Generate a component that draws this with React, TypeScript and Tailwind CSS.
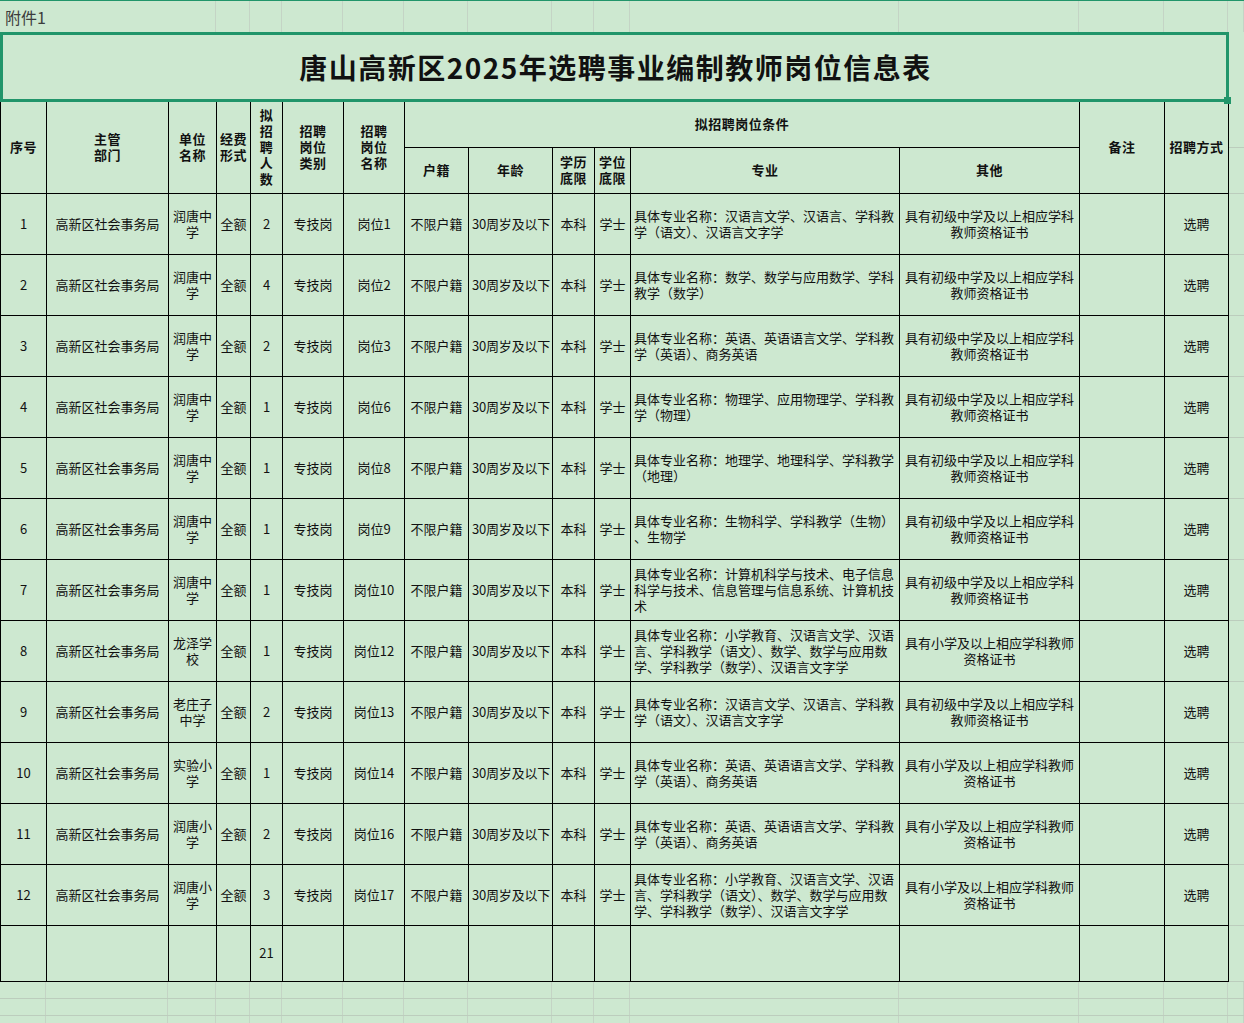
import React from 'react';

const MID = '具有初级中学及以上相应学科教师资格证书';
const PRI = '具有小学及以上相应学科教师资格证书';

const rows = [
  { no: 1, unit: '润唐中学', num: '2', post: '岗位1', major: '具体专业名称：汉语言文学、汉语言、学科教学（语文）、汉语言文字学', other: MID },
  { no: 2, unit: '润唐中学', num: '4', post: '岗位2', major: '具体专业名称：数学、数学与应用数学、学科教学（数学）', other: MID },
  { no: 3, unit: '润唐中学', num: '2', post: '岗位3', major: '具体专业名称：英语、英语语言文学、学科教学（英语）、商务英语', other: MID },
  { no: 4, unit: '润唐中学', num: '1', post: '岗位6', major: '具体专业名称：物理学、应用物理学、学科教学（物理）', other: MID },
  { no: 5, unit: '润唐中学', num: '1', post: '岗位8', major: '具体专业名称：地理学、地理科学、学科教学（地理）', other: MID },
  { no: 6, unit: '润唐中学', num: '1', post: '岗位9', major: '具体专业名称：生物科学、学科教学（生物）、生物学', other: MID },
  { no: 7, unit: '润唐中学', num: '1', post: '岗位10', major: '具体专业名称：计算机科学与技术、电子信息科学与技术、信息管理与信息系统、计算机技术', other: MID },
  { no: 8, unit: '龙泽学校', num: '1', post: '岗位12', major: '具体专业名称：小学教育、汉语言文学、汉语言、学科教学（语文）、数学、数学与应用数学、学科教学（数学）、汉语言文字学', other: PRI },
  { no: 9, unit: '老庄子中学', num: '2', post: '岗位13', major: '具体专业名称：汉语言文学、汉语言、学科教学（语文）、汉语言文字学', other: MID },
  { no: 10, unit: '实验小学', num: '1', post: '岗位14', major: '具体专业名称：英语、英语语言文学、学科教学（英语）、商务英语', other: PRI },
  { no: 11, unit: '润唐小学', num: '2', post: '岗位16', major: '具体专业名称：英语、英语语言文学、学科教学（英语）、商务英语', other: PRI },
  { no: 12, unit: '润唐小学', num: '3', post: '岗位17', major: '具体专业名称：小学教育、汉语言文学、汉语言、学科教学（语文）、数学、数学与应用数学、学科教学（数学）、汉语言文字学', other: PRI },
];

const widths = [
  'w-[46px]', 'w-[122px]', 'w-[48px]', 'w-[34px]', 'w-[32px]', 'w-[61px]', 'w-[61px]', 'w-[64px]',
  'w-[84px]', 'w-[42px]', 'w-[36px]', 'w-[269px]', 'w-[180px]', 'w-[85px]', 'w-[64px]', 'w-[16px]',
];

const gridCols =
  'grid grid-cols-[46px_122px_48px_34px_32px_61px_61px_64px_84px_42px_36px_269px_180px_85px_64px_16px]';

const td = 'border border-black text-center align-middle px-[3px] font-normal';
const th = 'border border-black border-t-0 text-center align-middle px-[3px] font-bold tracking-[0.5px]';
const pad = 'border-0 border-b border-[#bccdbd]';

export default function App() {
  return (
    <div className="w-[1244px] h-[1023px] overflow-hidden bg-[#cde8d0] text-[#111] font-['Noto_Sans_CJK_SC',sans-serif] text-[13px] leading-[16px]">
      {/* 附件1 row */}
      <div className={`${gridCols} h-[32px] border-t border-[#21956a]`}>
        <div className="col-span-2 flex items-center pl-[5px] text-[16px] text-[#3c3c3c]">附件1</div>
        {Array.from({ length: 14 }).map((_, i) => (
          <div key={i} className="border-r border-[#c4d4c5]" />
        ))}
      </div>

      {/* Title */}
      <div className="relative w-[1229px] h-[70px] border-[3px] border-[#21956a] flex items-center justify-center">
        <span className="text-[28px] font-bold tracking-[1.5px] leading-none pl-[2px]">
          唐山高新区2025年选聘事业编制教师岗位信息表
        </span>
        <span className="absolute -right-[5px] -bottom-[5px] w-[7px] h-[7px] bg-[#21956a]" />
      </div>

      <table className="table-fixed border-collapse w-[1244px]">
        <colgroup>
          {widths.map((w, i) => (
            <col key={i} className={w} />
          ))}
        </colgroup>
        <thead>
          <tr className="h-[45px]">
            <th rowSpan={2} className={th}>序号</th>
            <th rowSpan={2} className={th}>主管<br />部门</th>
            <th rowSpan={2} className={th}>单位<br />名称</th>
            <th rowSpan={2} className={`${th} px-0`}>经费<br />形式</th>
            <th rowSpan={2} className={`${th} px-0`}>拟<br />招<br />聘<br />人<br />数</th>
            <th rowSpan={2} className={th}>招聘<br />岗位<br />类别</th>
            <th rowSpan={2} className={th}>招聘<br />岗位<br />名称</th>
            <th colSpan={6} className={th}>拟招聘岗位条件</th>
            <th rowSpan={2} className={th}>备注</th>
            <th rowSpan={2} className={`${th} px-0`}>招聘方式</th>
            <td className={pad} />
          </tr>
          <tr className="h-[46px]">
            <th className={`${th} border-t`}>户籍</th>
            <th className={`${th} border-t`}>年龄</th>
            <th className={`${th} border-t px-0`}>学历<br />底限</th>
            <th className={`${th} border-t px-0`}>学位<br />底限</th>
            <th className={`${th} border-t`}>专业</th>
            <th className={`${th} border-t`}>其他</th>
            <td className={pad} />
          </tr>
        </thead>
        <tbody>
          {rows.map((r) => (
            <tr key={r.no} className="h-[61px]">
              <td className={td}>{r.no}</td>
              <td className={td}>高新区社会事务局</td>
              <td className={td}>{r.unit}</td>
              <td className={`${td} px-0`}>全额</td>
              <td className={td}>{r.num}</td>
              <td className={td}>专技岗</td>
              <td className={td}>{r.post}</td>
              <td className={`${td} px-0`}>不限户籍</td>
              <td className={`${td} px-0 whitespace-nowrap tracking-[-0.2px]`}>30周岁及以下</td>
              <td className={td}>本科</td>
              <td className={`${td} px-0`}>学士</td>
              <td className={`${td} text-left pl-[3px] pr-[4px] [line-break:anywhere]`}>{r.major}</td>
              <td className={`${td} px-[4px] [line-break:anywhere]`}>{r.other}</td>
              <td className={td} />
              <td className={td}>选聘</td>
              <td className={pad} />
            </tr>
          ))}
          <tr className="h-[56px]">
            {Array.from({ length: 15 }).map((_, i) => (
              <td key={i} className={td}>{i === 4 ? '21' : ''}</td>
            ))}
            <td className={pad} />
          </tr>
        </tbody>
      </table>

      {/* empty sheet rows below */}
      {Array.from({ length: 3 }).map((_, r) => (
        <div key={r} className={`${gridCols} h-[17px] border-b border-[#bccdbd]`}>
          {Array.from({ length: 16 }).map((_, i) => (
            <div key={i} className="border-r border-[#c4d4c5]" />
          ))}
        </div>
      ))}
    </div>
  );
}
